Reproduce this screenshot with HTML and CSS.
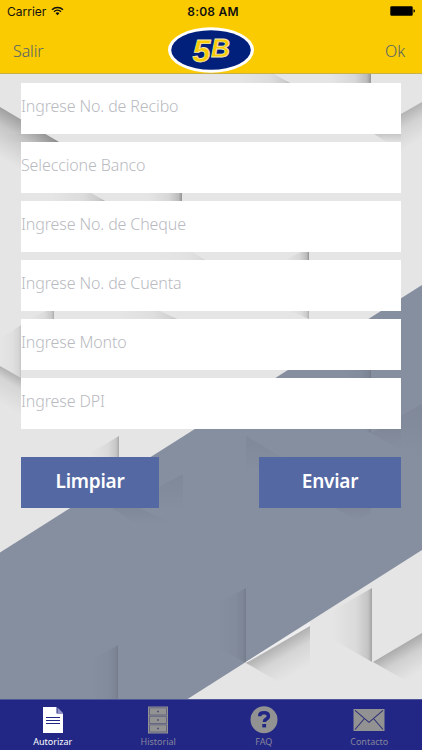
FILE: index.html
```
<!DOCTYPE html>
<html lang="es">
<head>
  <meta charset="UTF-8">
  <meta name="viewport" content="width=device-width, initial-scale=1.0">
  <title>Autorizar</title>
  <link rel="stylesheet" href="styles.css">
</head>
<body>
  <div class="app">
    <!-- Folded paper background -->
    <svg class="backdrop" viewBox="0 0 422 750" aria-hidden="true">
      <defs>
        <linearGradient id="left" x1="1" y1="0" x2="0" y2="0">
          <stop offset="0" stop-color="#000" stop-opacity=".36"/>
          <stop offset=".1" stop-color="#000" stop-opacity=".18"/>
          <stop offset=".4" stop-color="#000" stop-opacity=".06"/>
          <stop offset="1" stop-color="#000" stop-opacity="0"/>
        </linearGradient>
        <linearGradient id="fold" gradientUnits="userSpaceOnUse" x1="28" y1="124" x2="6" y2="161">
          <stop offset="0" stop-color="#000" stop-opacity=".3"/>
          <stop offset=".35" stop-color="#000" stop-opacity=".13"/>
          <stop offset="1" stop-color="#000" stop-opacity="0"/>
        </linearGradient>
        <linearGradient id="fold2" gradientUnits="userSpaceOnUse" x1="10" y1="372" x2="-6" y2="400">
          <stop offset="0" stop-color="#000" stop-opacity=".22"/>
          <stop offset=".3" stop-color="#000" stop-opacity=".07"/>
          <stop offset="1" stop-color="#000" stop-opacity="0"/>
        </linearGradient>
        <linearGradient id="fold3" gradientUnits="userSpaceOnUse" x1="278" y1="644.500" x2="295" y2="674">
          <stop offset="0" stop-color="#000" stop-opacity=".23"/>
          <stop offset=".4" stop-color="#000" stop-opacity=".07"/>
          <stop offset="1" stop-color="#000" stop-opacity="0"/>
        </linearGradient>
        <linearGradient id="fold4" gradientUnits="userSpaceOnUse" x1="397" y1="648" x2="413" y2="676">
          <stop offset="0" stop-color="#000" stop-opacity=".25"/>
          <stop offset=".4" stop-color="#000" stop-opacity=".09"/>
          <stop offset="1" stop-color="#000" stop-opacity="0"/>
        </linearGradient>
        <linearGradient id="fold5" gradientUnits="userSpaceOnUse" x1="410" y1="109" x2="426" y2="137">
          <stop offset="0" stop-color="#000" stop-opacity=".22"/>
          <stop offset=".4" stop-color="#000" stop-opacity=".08"/>
          <stop offset="1" stop-color="#000" stop-opacity="0"/>
        </linearGradient>
        <linearGradient id="down" x1="0" y1="0" x2="0" y2="1">
          <stop offset="0" stop-color="#000" stop-opacity=".13"/>
          <stop offset="1" stop-color="#000" stop-opacity="0"/>
        </linearGradient>
      </defs>
      <rect width="422" height="750" fill="#e5e5e5"/>
      <path fill="url(#fold)" d="M0 107L59 142V200H0z"/>
      <path fill="url(#left)" opacity=".6" d="M240 74H274L290 83H240z"/>
      <path fill="url(#left)" d="M330 74H371V83H330z"/>
      <path fill="url(#fold5)" d="M401 114L422 102V163H401z"/>
      <path fill="url(#down)" d="M374 134H401V143H388z"/>
      <path fill="url(#left)" opacity=".5" d="M0 134H45L59 142H0z"/>
      <path fill="url(#left)" opacity=".7" d="M52 193H91L105 201H52z"/>
      <path fill="url(#left)" d="M148 193H182V201H148z"/>
      <path fill="url(#left)" opacity=".25" d="M160 252H192L205 260H160z"/>
      <path fill="url(#left)" d="M285 260L301 252H309V260z"/>
      <path fill="url(#left)" opacity=".7" d="M30 319L46 311H54V319z"/>
      <path fill="url(#left)" opacity=".5" d="M120 311H160L177 319H120z"/>
      <path fill="url(#left)" opacity=".7" d="M290 311H309V319z"/>
      <path fill="url(#left)" opacity=".4" d="M0 339L21 325V378L0 366z"/>
      <path fill="url(#fold2)" d="M0 366L21 378V440H0z"/>
      <path fill="url(#left)" opacity=".75" d="M90 453L119 436V458H90z"/>
      <path fill="#868fa0" d="M422 285L0 552.500V700H186L422 550z"/>
      <g opacity=".35">
        <path fill="url(#down)" d="M159 487L183 474V508H159z"/>
        <path fill="url(#down)" d="M246 436L283 458V470H246z"/>
        <path fill="url(#down)" d="M112 508H140L170 523H135z"/>
        <path fill="url(#down)" d="M335 508H371V513L358 521z"/>
        <path fill="url(#down)" d="M401 416L422 404V450H401z"/>
        <path fill="url(#left)" d="M361 429H371V433z"/>
        <path fill="url(#down)" d="M371 433L379 429H401V450z"/>
        <path fill="url(#left)" d="M345 370H371V378H345z"/>
        <path fill="url(#left)" d="M218 603L246 588V663L218 648z"/>
        <path fill="url(#left)" d="M92 660L118 645V700H92z"/>
      </g>
      <path fill="#eeeef0" d="M246 662L310 622V626L250 662z"/>
      <path fill="url(#fold3)" d="M246 663L310 626V700z"/>
      <path fill="url(#left)" opacity=".8" d="M332 611L372 588V662L332 639z"/>
      <path fill="url(#fold4)" d="M373 662L422 633V690z"/>
    </svg>

    <header class="header">
      <div class="status">
        <div class="carrier">
          <span>Carrier</span>
          <svg class="wifi" viewBox="0 0 13 10" aria-hidden="true">
            <path d="M1 3.700a7.800 7.800 0 0 1 11 0M3 5.700a5 5 0 0 1 7 0" fill="none" stroke="#111" stroke-width="1.500"/>
            <path d="M6.500 9.300L4.600 7.300a2.700 2.700 0 0 1 3.800 0z" fill="#111"/>
          </svg>
        </div>
        <span class="time">8:08 AM</span>
        <svg class="battery" viewBox="0 0 26 10" aria-hidden="true">
          <rect x=".3" y=".3" width="22.400" height="9.400" rx="1.300"/>
          <path d="M23.500 3.300q1.500.3 1.500 1.700t-1.500 1.700z"/>
        </svg>
      </div>
      <nav class="nav">
        <a class="nav-link">Salir</a>
        <svg class="logo" viewBox="0 0 86 46" role="img" aria-label="5B">
          <ellipse cx="43" cy="23" rx="43" ry="22.800" fill="#fff"/>
          <ellipse cx="43" cy="23" rx="39.800" ry="19.800" fill="#00207c"/>
          <text class="logo-five" x="24.500" y="34.500" textLength="18" lengthAdjust="spacingAndGlyphs">5</text>
          <text class="logo-b" x="43" y="30" textLength="19" lengthAdjust="spacingAndGlyphs">B</text>
        </svg>
        <a class="nav-link">Ok</a>
      </nav>
    </header>

    <main class="form">
      <input class="field" type="text" placeholder="Ingrese No. de Recibo">
      <input class="field" type="text" placeholder="Seleccione Banco">
      <input class="field" type="text" placeholder="Ingrese No. de Cheque">
      <input class="field" type="text" placeholder="Ingrese No. de Cuenta">
      <input class="field" type="text" placeholder="Ingrese Monto">
      <input class="field" type="text" placeholder="Ingrese DPI">
      <div class="actions">
        <button class="btn btn-clear" type="button">Limpiar</button>
        <button class="btn btn-send" type="button">Enviar</button>
      </div>
    </main>

    <footer class="tabs">
      <a class="tab active">
        <svg class="tab-icon" viewBox="0 0 32 28" aria-hidden="true">
          <path d="M6 1h13.500v6.500H26V27H6z" fill="#fff"/>
          <path d="M20.500 1.500L26 7h-5.500z" fill="#9295c8"/>
          <path d="M9 11.500h14M9 14.500h14M9 17.500h14" stroke="#222786" stroke-width="1.100"/>
        </svg>
        <span>Autorizar</span>
      </a>
      <a class="tab">
        <svg class="tab-icon" viewBox="0 0 32 28" aria-hidden="true">
          <path d="M6 .5h20v27H6z" fill="#929292"/>
          <path d="M7.500 1.800h17v7.200h-17zM7.500 10.300h17v7.200h-17zM7.500 18.800h17v7.200h-17z" fill="none" stroke="#5c5d80" stroke-width=".8"/>
          <path d="M15.200 4.700h1.600v1.600h-1.600zM15.200 13.200h1.600v1.600h-1.600zM15.200 21.700h1.600v1.600h-1.600z" fill="#454779"/>
        </svg>
        <span>Historial</span>
      </a>
      <a class="tab">
        <svg class="tab-icon" viewBox="0 0 32 28" aria-hidden="true">
          <circle cx="16" cy="13.800" r="13.500" fill="#929292"/>
          <path d="M11.800 10.200V9.500q0-2.700 4.300-2.700t4.300 3.200q0 2-2.100 3.100-1.900 1-1.900 2.900" fill="none" stroke="#222786" stroke-width="3.500"/>
          <rect x="14.300" y="18" width="3.800" height="3.400" fill="#222786"/>
        </svg>
        <span>FAQ</span>
      </a>
      <a class="tab">
        <svg class="tab-icon" viewBox="0 0 32 28" aria-hidden="true">
          <path d="M.5 3h31v22H.5z" fill="#929292"/>
          <path d="M2 4.300l14 12 14-12M2 23.500l9.500-11M30 23.500l-9.500-11" fill="none" stroke="#303278" stroke-width="1.100"/>
        </svg>
        <span>Contacto</span>
      </a>
    </footer>
  </div>
</body>
</html>
```
FILE: styles.css
```
* {
  box-sizing: border-box;
}

body {
  margin: 0;
  font-family: "Noto Sans", sans-serif;
}

.app {
  position: relative;
  display: flex;
  flex-direction: column;
  width: 422px;
  height: 750px;
  overflow: hidden;
}

.backdrop {
  position: absolute;
  inset: 0;
  z-index: -1;
}

.header {
  height: 74px;
  background: #facb00;
  border-bottom: 1px solid #c9b04b;
}

.status {
  display: grid;
  grid-template-columns: 1fr auto 1fr;
  align-items: center;
  height: 22px;
  padding: 0 6px 0 7px;
  font-family: Inter, sans-serif;
  font-size: 12px;
  color: #111;
}

.carrier {
  display: flex;
  align-items: center;
  gap: 5px;
}

.wifi {
  width: 13px;
  height: 10px;
}

.time {
  padding-left: 3px;
  font-weight: 600;
  letter-spacing: 0.2px;
}

.battery {
  width: 26px;
  height: 10px;
  justify-self: end;
}

.nav {
  display: flex;
  justify-content: space-between;
  height: 51px;
  padding: 5px 17px 0 13px;
}

.nav-link {
  width: 60px;
  padding-top: 13px;
  font-size: 16px;
  line-height: 22px;
  font-weight: 300;
  letter-spacing: -0.1px;
  color: #53636b;
}

.nav-link:first-child {
  width: 64px;
}

.nav-link:last-child {
  text-align: right;
}

.logo {
  width: 86px;
  height: 46px;
}

.logo-five,
.logo-b {
  font-family: "Liberation Sans", sans-serif;
  font-weight: bold;
  font-style: italic;
  fill: #facb00;
  stroke: #f3e9b0;
  stroke-width: 0.8px;
}

.logo-five {
  font-size: 32px;
}

.logo-b {
  font-size: 25px;
}

.form {
  display: flex;
  flex: 1;
  flex-direction: column;
  gap: 8px;
  padding: 9px 21px 0;
}

.field {
  width: 100%;
  height: 51px;
  padding: 0 0 5px;
  border: 0;
  border-radius: 0;
  outline: none;
  background: #fff;
  font-family: inherit;
  font-size: 16px;
  font-weight: 300;
  letter-spacing: -0.12px;
}

.field::placeholder {
  color: #b9babf;
  opacity: 1;
}

.actions {
  display: flex;
  justify-content: space-between;
  margin-top: 20px;
}

.btn {
  height: 51px;
  padding: 0 0 3px;
  border: 0;
  background: #5468a3;
  color: #fff;
  font-family: inherit;
  font-size: 19px;
  font-weight: 600;
  letter-spacing: -0.25px;
}

.btn-clear {
  width: 138px;
}

.btn-send {
  width: 142px;
}

.tabs {
  display: grid;
  grid-template-columns: repeat(4, 1fr);
  height: 51px;
  border-top: 1px solid #50569a;
  background: #222786;
}

.tab {
  display: flex;
  flex-direction: column;
  align-items: center;
  padding-top: 6px;
  font-size: 9px;
  line-height: 14px;
  color: #85859b;
}

.tab.active {
  color: #fff;
}

.tab-icon {
  width: 32px;
  height: 28px;
  margin-bottom: 1px;
}
```
